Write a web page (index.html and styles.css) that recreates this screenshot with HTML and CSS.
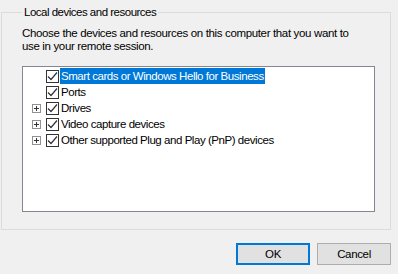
FILE: index.html
```html
<!DOCTYPE html>
<html>
<head>
<meta charset="utf-8">
<link rel="stylesheet" href="styles.css">
</head>
<body>
<div class="dialog">
  <fieldset class="group">
    <legend class="legend">Local devices and resources</legend>
    <p class="desc">Choose the devices and resources on this computer that you want to use in your remote session.</p>
    <div class="tree">
      <div class="row">
        <span class="exp blank"></span>
        <span class="chk"><svg width="11" height="11" viewBox="0 0 11 11"><path d="M1 5.5 L4 8.5 L10 1.5" fill="none" stroke="#333" stroke-width="1.2"/></svg></span>
        <span class="label sel">Smart cards or Windows Hello for Business</span>
      </div>
      <div class="row">
        <span class="exp blank"></span>
        <span class="chk"><svg width="11" height="11" viewBox="0 0 11 11"><path d="M1 5.5 L4 8.5 L10 1.5" fill="none" stroke="#333" stroke-width="1.2"/></svg></span>
        <span class="label">Ports</span>
      </div>
      <div class="row">
        <span class="exp"><svg width="9" height="9" viewBox="0 0 9 9"><path d="M2 4.5 H7 M4.5 2 V7" stroke="#333" stroke-width="1"/></svg></span>
        <span class="chk"><svg width="11" height="11" viewBox="0 0 11 11"><path d="M1 5.5 L4 8.5 L10 1.5" fill="none" stroke="#333" stroke-width="1.2"/></svg></span>
        <span class="label">Drives</span>
      </div>
      <div class="row">
        <span class="exp"><svg width="9" height="9" viewBox="0 0 9 9"><path d="M2 4.5 H7 M4.5 2 V7" stroke="#333" stroke-width="1"/></svg></span>
        <span class="chk"><svg width="11" height="11" viewBox="0 0 11 11"><path d="M1 5.5 L4 8.5 L10 1.5" fill="none" stroke="#333" stroke-width="1.2"/></svg></span>
        <span class="label">Video capture devices</span>
      </div>
      <div class="row">
        <span class="exp"><svg width="9" height="9" viewBox="0 0 9 9"><path d="M2 4.5 H7 M4.5 2 V7" stroke="#333" stroke-width="1"/></svg></span>
        <span class="chk"><svg width="11" height="11" viewBox="0 0 11 11"><path d="M1 5.5 L4 8.5 L10 1.5" fill="none" stroke="#333" stroke-width="1.2"/></svg></span>
        <span class="label">Other supported Plug and Play (PnP) devices</span>
      </div>
    </div>
  </fieldset>
  <div class="buttons">
    <button class="btn default">OK</button>
    <button class="btn">Cancel</button>
  </div>
</div>
</body>
</html>
```
FILE: styles.css
```css
html, body {
  margin: 0;
  padding: 0;
  background: #f0f0f0;
}
body {
  font-family: "Liberation Sans", Arial, sans-serif;
  font-size: 11.5px;
  letter-spacing: -0.35px;
  color: #000;
  width: 398px;
  height: 274px;
  overflow: hidden;
}
.dialog {
  padding: 5px 0 0 1px;
}
.group {
  margin: 0;
  width: 390px;
  height: 225px;
  box-sizing: border-box;
  border: 1px solid #dcdcdc;
  padding: 0 0 0 20px;
}
.legend {
  padding: 0 2px;
  margin-left: 0;
  line-height: 14px;
  letter-spacing: -0.5px;
}
.desc {
  margin: 8px 0 0 0;
  width: 340px;
  line-height: 13px;
}
.tree {
  margin-top: 13px;
  width: 353px;
  height: 146px;
  box-sizing: border-box;
  border: 1px solid #828790;
  background: #fff;
  padding-top: 1px;
}
.row {
  display: flex;
  align-items: center;
  height: 16px;
  padding-left: 9px;
}
.exp {
  width: 9px;
  height: 9px;
  box-sizing: border-box;
  border: 1px solid #919191;
  display: flex;
  align-items: center;
  justify-content: center;
  background: #fff;
  margin-right: 5px;
}
.exp svg { display: block; margin: -1px; }
.exp.blank { border-color: transparent; }
.chk {
  width: 13px;
  height: 13px;
  box-sizing: border-box;
  border: 1px solid #333;
  background: #fff;
  display: flex;
  align-items: center;
  justify-content: center;
  margin-right: 1px;
}
.chk svg { display: block; }
.label {
  padding: 0 1px;
  line-height: 16px;
  height: 16px;
  letter-spacing: -0.45px;
}
.label.sel {
  background: #0078d7;
  color: #fff;
}
.buttons {
  display: flex;
  justify-content: flex-end;
  gap: 7px;
  padding: 13px 7px 0 0;
}
.btn {
  font: inherit;
  letter-spacing: inherit;
  width: 74px;
  height: 22px;
  margin: 0;
  padding: 0;
  background: #e1e1e1;
  border: 1px solid #adadad;
  color: #000;
}
.btn.default {
  border: 2px solid #0078d7;
}
```
